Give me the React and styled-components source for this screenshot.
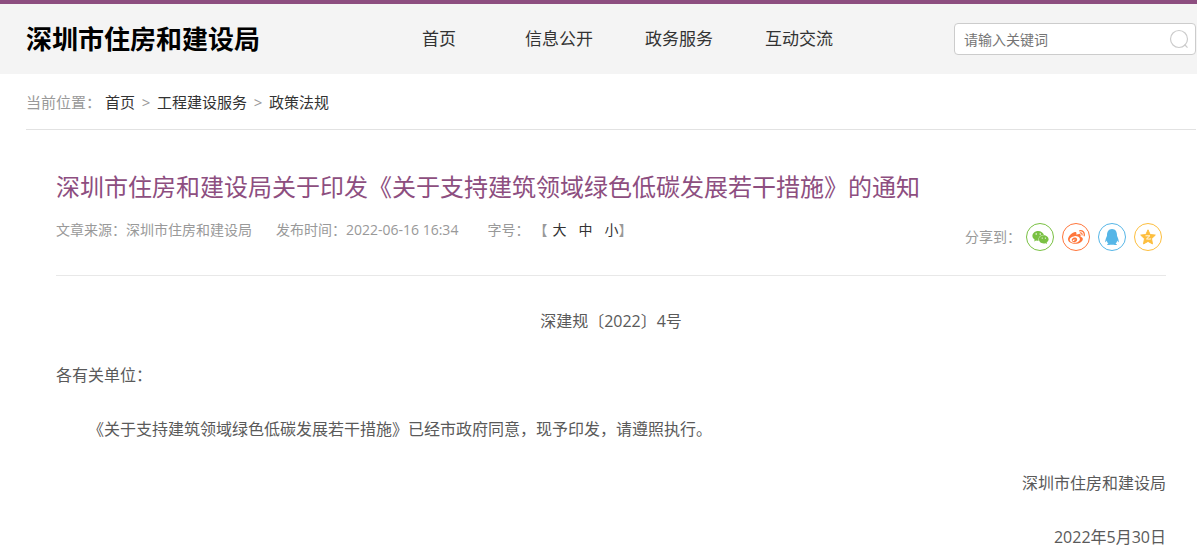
import React from "react";
import styled, { createGlobalStyle } from "styled-components";
import { FaWeixin, FaWeibo, FaQq } from "react-icons/fa";

const navItems = ["首页", "信息公开", "政务服务", "互动交流"];
const crumbs = ["首页", "工程建设服务", "政策法规"];
const fontSizes = ["大", "中", "小"];

const QzoneIcon = () => (
  <svg width="16" height="16" viewBox="0 0 16 16" aria-hidden="true">
    <path
      d="M8 .8l2.1 4.700 5.200.6-3.800 3.600 1 5.200L8 12.400l-4.500 2.500 1-5.200L.7 6.100l5.200-.6z"
      fill="currentColor"
      stroke="currentColor"
      strokeLinejoin="round"
    />
    <path
      d="M5.500 6.800h4.300L6.500 9.900c1.600.3 3 .3 4.500 0"
      fill="none"
      stroke="#fff"
      strokeWidth=".9"
    />
  </svg>
);

const SearchIcon = () => (
  <svg width="20" height="20" viewBox="0 0 20 20" aria-hidden="true">
    <g fill="none" stroke="#ccc" strokeWidth="1.2">
      <circle cx="10" cy="10" r="8.5" />
      <path d="M15.5 15.5l3 3.2" />
    </g>
  </svg>
);

const shares = [
  { name: "微信", color: "#7ac143", icon: <FaWeixin size={17} /> },
  { name: "微博", color: "#ff763b", icon: <FaWeibo size={17} /> },
  { name: "QQ", color: "#56b6e7", icon: <FaQq size={16} /> },
  { name: "QQ空间", color: "#fdbe3d", icon: <QzoneIcon /> },
];

const App = () => {
  return (
    <>
      <GlobalStyle />
      <Header>
        <Container>
          <HeaderRow>
            <SiteName>深圳市住房和建设局</SiteName>
            <Nav>
              {navItems.map((item) => (
                <NavLink href="#" key={item}>
                  {item}
                </NavLink>
              ))}
            </Nav>
            <Search role="search" onSubmit={(e) => e.preventDefault()}>
              <input
                type="text"
                aria-label="搜索"
                placeholder="请输入关键词"
              />
              <button type="submit" aria-label="搜索">
                <SearchIcon />
              </button>
            </Search>
          </HeaderRow>
        </Container>
      </Header>

      <Container>
        <Breadcrumb>
          <span>当前位置：</span>
          {crumbs.map((crumb, index) => (
            <React.Fragment key={crumb}>
              {index > 0 && <Separator>&gt;</Separator>}
              <a href="#">{crumb}</a>
            </React.Fragment>
          ))}
        </Breadcrumb>

        <Article>
          <Title>
            深圳市住房和建设局关于印发《关于支持建筑领域绿色低碳发展若干措施》的通知
          </Title>
          <MetaRow>
            <Meta>
              <span>文章来源：深圳市住房和建设局</span>
              <span>发布时间：2022-06-16 16:34</span>
              <SizePicker>
                <span>字号：</span>
                <SizeOptions>
                  【
                  {fontSizes.map((size) => (
                    <button type="button" key={size}>
                      {size}
                    </button>
                  ))}
                  】
                </SizeOptions>
              </SizePicker>
            </Meta>
            <Share>
              <span>分享到：</span>
              <ShareList>
                {shares.map(({ name, color, icon }) => (
                  <ShareLink
                    href="#"
                    aria-label={name}
                    $color={color}
                    key={name}
                  >
                    {icon}
                  </ShareLink>
                ))}
              </ShareList>
            </Share>
          </MetaRow>

          <Content>
            <Paragraph $align="center">深建规〔2022〕4号</Paragraph>
            <Paragraph>各有关单位：</Paragraph>
            <Paragraph $indent>
              《关于支持建筑领域绿色低碳发展若干措施》已经市政府同意，现予印发，请遵照执行。
            </Paragraph>
            <Paragraph $align="right">深圳市住房和建设局</Paragraph>
            <Paragraph $align="right">2022年5月30日</Paragraph>
          </Content>
        </Article>
      </Container>
    </>
  );
};

export default App;

const GlobalStyle = createGlobalStyle`
  * {
    box-sizing: border-box;
  }
  body {
    margin: 0;
    background-color: #fff;
    color: #333;
    font-family: "Open Sans", "Noto Sans CJK SC", sans-serif;
    font-size: 14px;
  }
  a {
    color: inherit;
    text-decoration: none;
  }
  button,
  input {
    padding: 0;
    border: none;
    background: none;
    font: inherit;
    color: inherit;
  }
  button {
    cursor: pointer;
  }
`;

const Container = styled.div`
  padding: 0 1px 0 26px;
`;

const Header = styled.header`
  border-top: 4px solid #8d4e80;
  background-color: #f4f4f4;
`;

const HeaderRow = styled.div`
  display: flex;
  align-items: center;
  height: 70px;
`;

const SiteName = styled.h1`
  flex: none;
  margin: 0;
  font-size: 26px;
  line-height: 42px;
  font-weight: 700;
  color: #000;
`;

const Nav = styled.nav`
  display: flex;
  margin-left: 119px;
`;

const NavLink = styled.a`
  width: 120px;
  font-size: 17px;
  line-height: 42px;
  text-align: center;
`;

const Search = styled.form`
  display: flex;
  align-items: center;
  width: 242px;
  height: 32px;
  margin-left: auto;
  padding: 0 6px 0 9px;
  border: 1px solid #ccc;
  border-radius: 4px;
  background-color: #fff;
  input {
    flex: 1;
    min-width: 0;
    outline: none;
  }
  input::placeholder {
    color: #757575;
  }
  button {
    display: flex;
  }
`;

const Breadcrumb = styled.nav`
  display: flex;
  align-items: center;
  height: 56px;
  border-bottom: 1px solid #e2e2e2;
  font-size: 15px;
  color: #999;
  span:first-child {
    margin-right: 4px;
  }
  a {
    color: #333;
  }
`;

const Separator = styled.span`
  width: 22px;
  text-align: center;
`;

const Article = styled.article`
  padding: 36px 30px 0;
`;

const Title = styled.h2`
  margin: 0;
  font-size: 24px;
  line-height: 42px;
  font-weight: 400;
  color: #8d4e80;
`;

const MetaRow = styled.div`
  display: flex;
  align-items: flex-start;
  justify-content: space-between;
  height: 68px;
  padding-top: 12px;
  border-bottom: 1px solid #e8e8e8;
  line-height: 20px;
  color: #999;
`;

const Meta = styled.div`
  display: flex;
  gap: 24px;
`;

const SizePicker = styled.div`
  display: flex;
  gap: 4px;
  padding-left: 5px;
`;

const SizeOptions = styled.div`
  display: flex;
  button {
    margin-left: 12px;
    color: #333;
  }
  button:first-of-type {
    margin-left: 5px;
  }
`;

const Share = styled.div`
  display: flex;
  align-items: center;
  gap: 5px;
  padding-top: 3px;
  margin-right: 4px;
`;

const ShareList = styled.div`
  display: flex;
  gap: 8px;
`;

const ShareLink = styled.a`
  display: flex;
  align-items: center;
  justify-content: center;
  width: 28px;
  height: 28px;
  border: 1px solid ${(props) => props.$color};
  border-radius: 50%;
  color: ${(props) => props.$color};
`;

const Content = styled.div`
  padding-top: 29px;
  font-size: 16px;
  color: #5a5a5a;
`;

const Paragraph = styled.p`
  margin: 0 0 22px;
  line-height: 32px;
  text-align: ${(props) => props.$align || "left"};
  text-indent: ${(props) => (props.$indent ? "2em" : "0")};
  &:last-child {
    margin-bottom: 0;
  }
`;
